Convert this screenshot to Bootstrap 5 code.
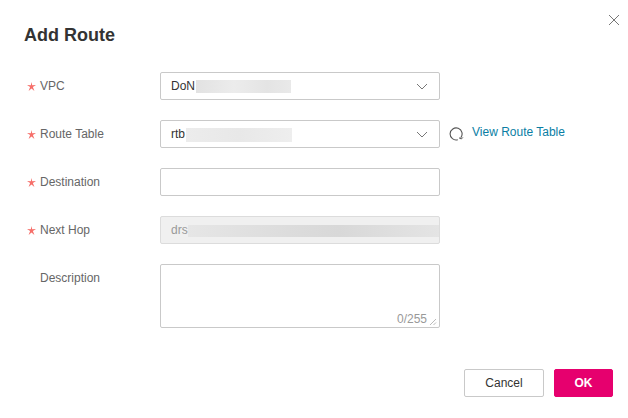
<!DOCTYPE html>
<html lang="en">
<head>
<meta charset="utf-8">
<title>Add Route</title>
<link href="https://cdn.jsdelivr.net/npm/bootstrap@5.3.0/dist/css/bootstrap.min.css" rel="stylesheet">
<style>
html, body { height: 100%; background: #fff; }
body { font-family: "Liberation Sans", Arial, sans-serif; font-size: 12px; color: #333; overflow: hidden; }
.dlg { width: 628px; height: 418px; position: relative; background: #fff; }
.dlg-close { position: absolute; left: 608px; top: 14px; width: 12px; height: 12px; background: none; border: 0; padding: 0; display: block; line-height: 0; }
.dlg-title { font-size: 18px; font-weight: 700; line-height: 24px; color: #333; margin: 0; padding: 23px 0 0 24px; }
.dlg-form { padding: 25px 0 0 27px; display: flex; flex-direction: column; gap: 20px; }
.frow { display: flex; align-items: flex-start; height: 28px; }
.frow-tall { height: 64px; }
.req { width: 13px; flex: none; line-height: 0; height: 28px; display: flex; align-items: center; padding-top: 1px; }
.flabel { width: 120px; flex: none; color: #666; line-height: 28px; }
.fbox { width: 280px; height: 28px; border: 1px solid #c9c9c9; border-radius: 2px; background: #fff; position: relative; flex: none; padding-left: 10px; line-height: 26px; color: #333; display: flex; align-items: center; overflow: hidden; }
.fbox-off { background: #f0f0f0; border-color: #dcdcdc; color: #999; }
.fbox-tall { height: 64px; }
.mask { height: 13px; background: linear-gradient(90deg, #e2e2e2, #ececec 40%, #e4e4e4 75%, #e9e9e9); }
.mask-v { width: 95px; margin-left: 1px; }
.mask-r { width: 106px; height: 14px; margin-top: 1px; margin-left: 1px; background: linear-gradient(90deg, #ececec, #e8e8e8 50%, #eee); }
.mask-d { flex: 1; height: 12px; margin-top: 1px; background: linear-gradient(90deg, #e6e6e6, #dcdcdc 40%, #d8d8d8 60%, #e4e4e4); }
.chev { position: absolute; right: 11px; top: 10px; line-height: 0; }
.counter { position: absolute; right: 12px; bottom: 1px; line-height: 14px; color: #999; }
.grip { position: absolute; right: 2px; bottom: 1px; line-height: 0; }
.side { display: flex; align-items: center; height: 25px; margin-left: 9px; }
.side svg { margin-top: 3px; }
.side a { color: #0a7ea4; text-decoration: none; margin-left: 8px; margin-bottom: 1px; }
.dlg-foot { position: absolute; left: 464px; top: 369px; display: flex; gap: 10px; }
.bt { height: 28px; font-size: 12px; padding: 0; border-radius: 2px; line-height: 26px; }
.bt-cancel { width: 80px; background: #fff; border: 1px solid #c9c9c9; color: #333; }
.bt-ok { width: 59px; background: #e6006e; border: 1px solid #e6006e; color: #fff; font-weight: 700; }
</style>
</head>
<body>
<div class="dlg">
  <button type="button" class="dlg-close" aria-label="Close">
    <svg width="12" height="12" viewBox="0 0 12 12"><path d="M1 1l10 10M11 1L1 11" stroke="#777" stroke-width="1" fill="none"/></svg>
  </button>
  <h1 class="dlg-title">Add Route</h1>
  <form class="dlg-form">
    <div class="frow">
      <span class="req"><svg width="9" height="9" viewBox="0 0 9 9"><path d="M4.5 0L5.2 3.2 9 2.9 5.9 4.9 7.4 9 4.5 6.5 1.6 9 3.1 4.9 0 2.9 3.8 3.2z" fill="#f66f6a"/></svg></span>
      <label class="flabel">VPC</label>
      <div class="fbox"><span>DoN</span><span class="mask mask-v"></span>
        <span class="chev"><svg width="12" height="7" viewBox="0 0 12 7"><path d="M1 1l5 5 5-5" stroke="#777" fill="none"/></svg></span>
      </div>
    </div>
    <div class="frow">
      <span class="req"><svg width="9" height="9" viewBox="0 0 9 9"><path d="M4.5 0L5.2 3.2 9 2.9 5.9 4.9 7.4 9 4.5 6.5 1.6 9 3.1 4.9 0 2.9 3.8 3.2z" fill="#f66f6a"/></svg></span>
      <label class="flabel">Route Table</label>
      <div class="fbox"><span>rtb</span><span class="mask mask-r"></span>
        <span class="chev"><svg width="12" height="7" viewBox="0 0 12 7"><path d="M1 1l5 5 5-5" stroke="#777" fill="none"/></svg></span>
      </div>
      <div class="side">
        <svg width="15" height="14" viewBox="0 0 15 14"><path d="M11.7 10.8A6 6 0 1 0 8.8 12.7" stroke="#555" stroke-width="1.1" fill="none"/><path d="M10 10.8l2.3 1.2 1.6-1.6" stroke="#555" stroke-width="1" fill="none"/></svg>
        <a href="#">View Route Table</a>
      </div>
    </div>
    <div class="frow">
      <span class="req"><svg width="9" height="9" viewBox="0 0 9 9"><path d="M4.5 0L5.2 3.2 9 2.9 5.9 4.9 7.4 9 4.5 6.5 1.6 9 3.1 4.9 0 2.9 3.8 3.2z" fill="#f66f6a"/></svg></span>
      <label class="flabel">Destination</label>
      <div class="fbox"></div>
    </div>
    <div class="frow">
      <span class="req"><svg width="9" height="9" viewBox="0 0 9 9"><path d="M4.5 0L5.2 3.2 9 2.9 5.9 4.9 7.4 9 4.5 6.5 1.6 9 3.1 4.9 0 2.9 3.8 3.2z" fill="#f66f6a"/></svg></span>
      <label class="flabel">Next Hop</label>
      <div class="fbox fbox-off"><span>drs</span><span class="mask mask-d"></span></div>
    </div>
    <div class="frow frow-tall">
      <span class="req"></span>
      <label class="flabel">Description</label>
      <div class="fbox fbox-tall">
        <span class="counter">0/255</span>
        <span class="grip"><svg width="8" height="8" viewBox="0 0 8 8"><path d="M1 7l6-6M4.5 7L7 4.5" stroke="#bbb" fill="none"/></svg></span>
      </div>
    </div>
  </form>
  <div class="dlg-foot">
    <button type="button" class="btn bt bt-cancel">Cancel</button>
    <button type="button" class="btn bt bt-ok">OK</button>
  </div>
</div>
<script src="https://cdn.jsdelivr.net/npm/bootstrap@5.3.0/dist/js/bootstrap.bundle.min.js"></script>
</body>
</html>
